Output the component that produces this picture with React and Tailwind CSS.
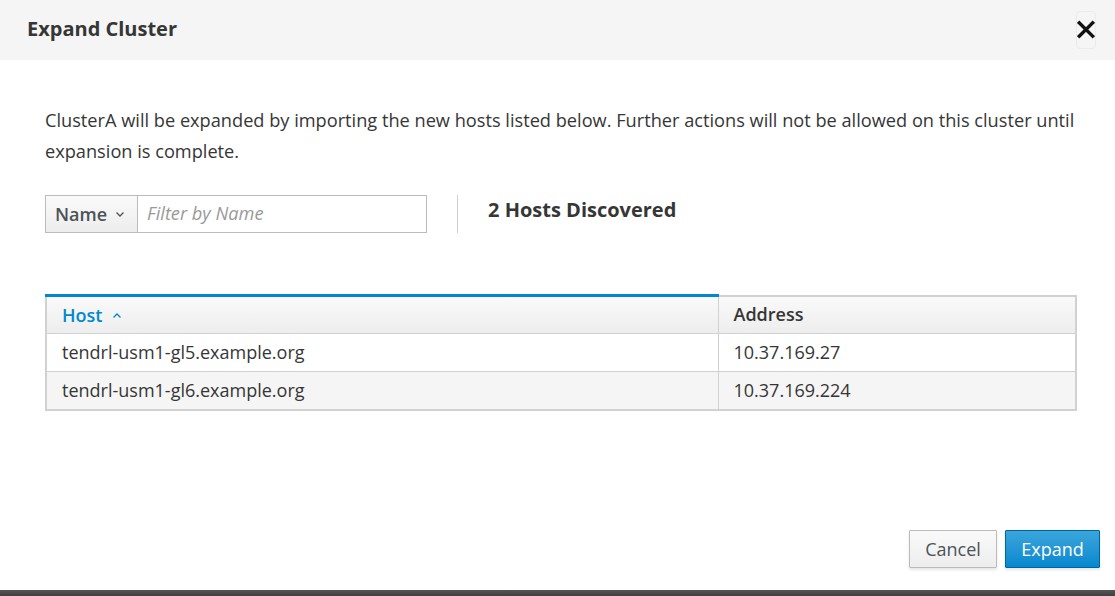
import React from 'react';

const hosts = [
  { host: 'tendrl-usm1-gl5.example.org', address: '10.37.169.27' },
  { host: 'tendrl-usm1-gl6.example.org', address: '10.37.169.224' },
];

function CloseIcon() {
  return (
    <svg width="19" height="19" viewBox="0 0 19 19">
      <path d="M2.5 2.5 L16.5 16.5 M16.5 2.5 L2.5 16.5" stroke="#111" strokeWidth="3.6" strokeLinecap="square" />
    </svg>
  );
}

function Chevron({ up, color }) {
  return (
    <svg width="10" height="7" viewBox="0 0 10 7">
      <path d={up ? 'M1.5 5.5 L5 2 L8.5 5.5' : 'M1.5 1.5 L5 5 L8.5 1.5'} fill="none" stroke={color} strokeWidth="1.3" />
    </svg>
  );
}

export default function App() {
  return (
    <div className="w-[1115px] h-[596px] flex flex-col bg-white text-[#363636]" style={{ fontFamily: '"Open Sans", "Noto Sans", sans-serif' }}>
      <div className="h-[60px] bg-[#f5f5f5] flex items-center justify-between pl-[27px] pr-[19px] shrink-0">
        <h1 className="text-[20px] font-bold text-[#363636] pb-[2px]">Expand Cluster</h1>
        <button className="w-[20px] h-[38px] flex items-center justify-center border border-[#ebebeb] rounded-sm mb-[1px]">
          <CloseIcon />
        </button>
      </div>

      <div className="flex-1 pl-[45px] pr-[38px] pt-[45px]">
        <p className="text-[18.2px] leading-[31px] text-[#363636]">
          ClusterA will be expanded by importing the new hosts listed below. Further actions will not be allowed on this cluster until expansion is complete.
        </p>

        <div className="flex items-start mt-[28px]">
          <div className="flex h-[38px]">
            <button className="w-[93px] h-full flex items-center gap-[8px] pl-[9px] border border-[#bbb] bg-gradient-to-b from-[#fafafa] to-[#ededed] text-[18px] font-semibold text-[#4d5258]">
              Name
              <Chevron color="#4d5258" />
            </button>
            <div className="w-[289px] h-full flex items-center border border-l-0 border-[#bbb] pl-[9px] text-[18.2px] italic text-[#999]">
              Filter by Name
            </div>
          </div>
          <div className="w-px h-[38px] bg-[#d1d1d1] ml-[30px]"></div>
          <div className="ml-[30px] text-[20px] font-bold text-[#363636]">2 Hosts Discovered</div>
        </div>

        <table className="mt-[61px] w-full border-2 border-[#d1d1d1] border-collapse text-[18px]">
          <thead>
            <tr className="bg-gradient-to-b from-[#fafafa] to-[#ededed]">
              <th className="w-[672px] h-[38px] text-left font-semibold text-[#0088ce] pl-[15px] border-t-[3px] border-t-[#0088ce] border-b border-b-[#d1d1d1]">
                <span className="inline-flex items-center gap-[10px]">Host <Chevron up color="#0088ce" /></span>
              </th>
              <th className="h-[38px] text-left font-semibold text-[#363636] pl-[15px] border-l border-[#d1d1d1] border-b">Address</th>
            </tr>
          </thead>
          <tbody>
            {hosts.map((h, i) => (
              <tr key={h.host} className={i % 2 ? 'bg-[#f5f5f5]' : 'bg-white'}>
                <td className="h-[38px] pl-[15px] border-b border-[#d1d1d1]">{h.host}</td>
                <td className="h-[38px] pl-[15px] border-l border-b border-[#d1d1d1]">{h.address}</td>
              </tr>
            ))}
          </tbody>
        </table>
      </div>

      <div className="flex justify-end gap-[8px] pr-[15px] pb-[22px] shrink-0">
        <button className="w-[88px] h-[38px] border border-[#bbb] rounded-[1px] bg-gradient-to-b from-[#fafafa] to-[#ededed] text-[18px] text-[#4d5258] shadow-[0_2px_3px_rgba(3,3,3,0.1)]">Cancel</button>
        <button className="w-[95px] h-[38px] border border-[#00659c] rounded-[1px] bg-gradient-to-b from-[#39a5dc] to-[#0088ce] text-[18px] text-white shadow-[0_2px_3px_rgba(3,3,3,0.1)]">Expand</button>
      </div>
      <div className="h-[6px] bg-gradient-to-b from-[#555] to-[#3f3f3f] shrink-0"></div>
    </div>
  );
}
